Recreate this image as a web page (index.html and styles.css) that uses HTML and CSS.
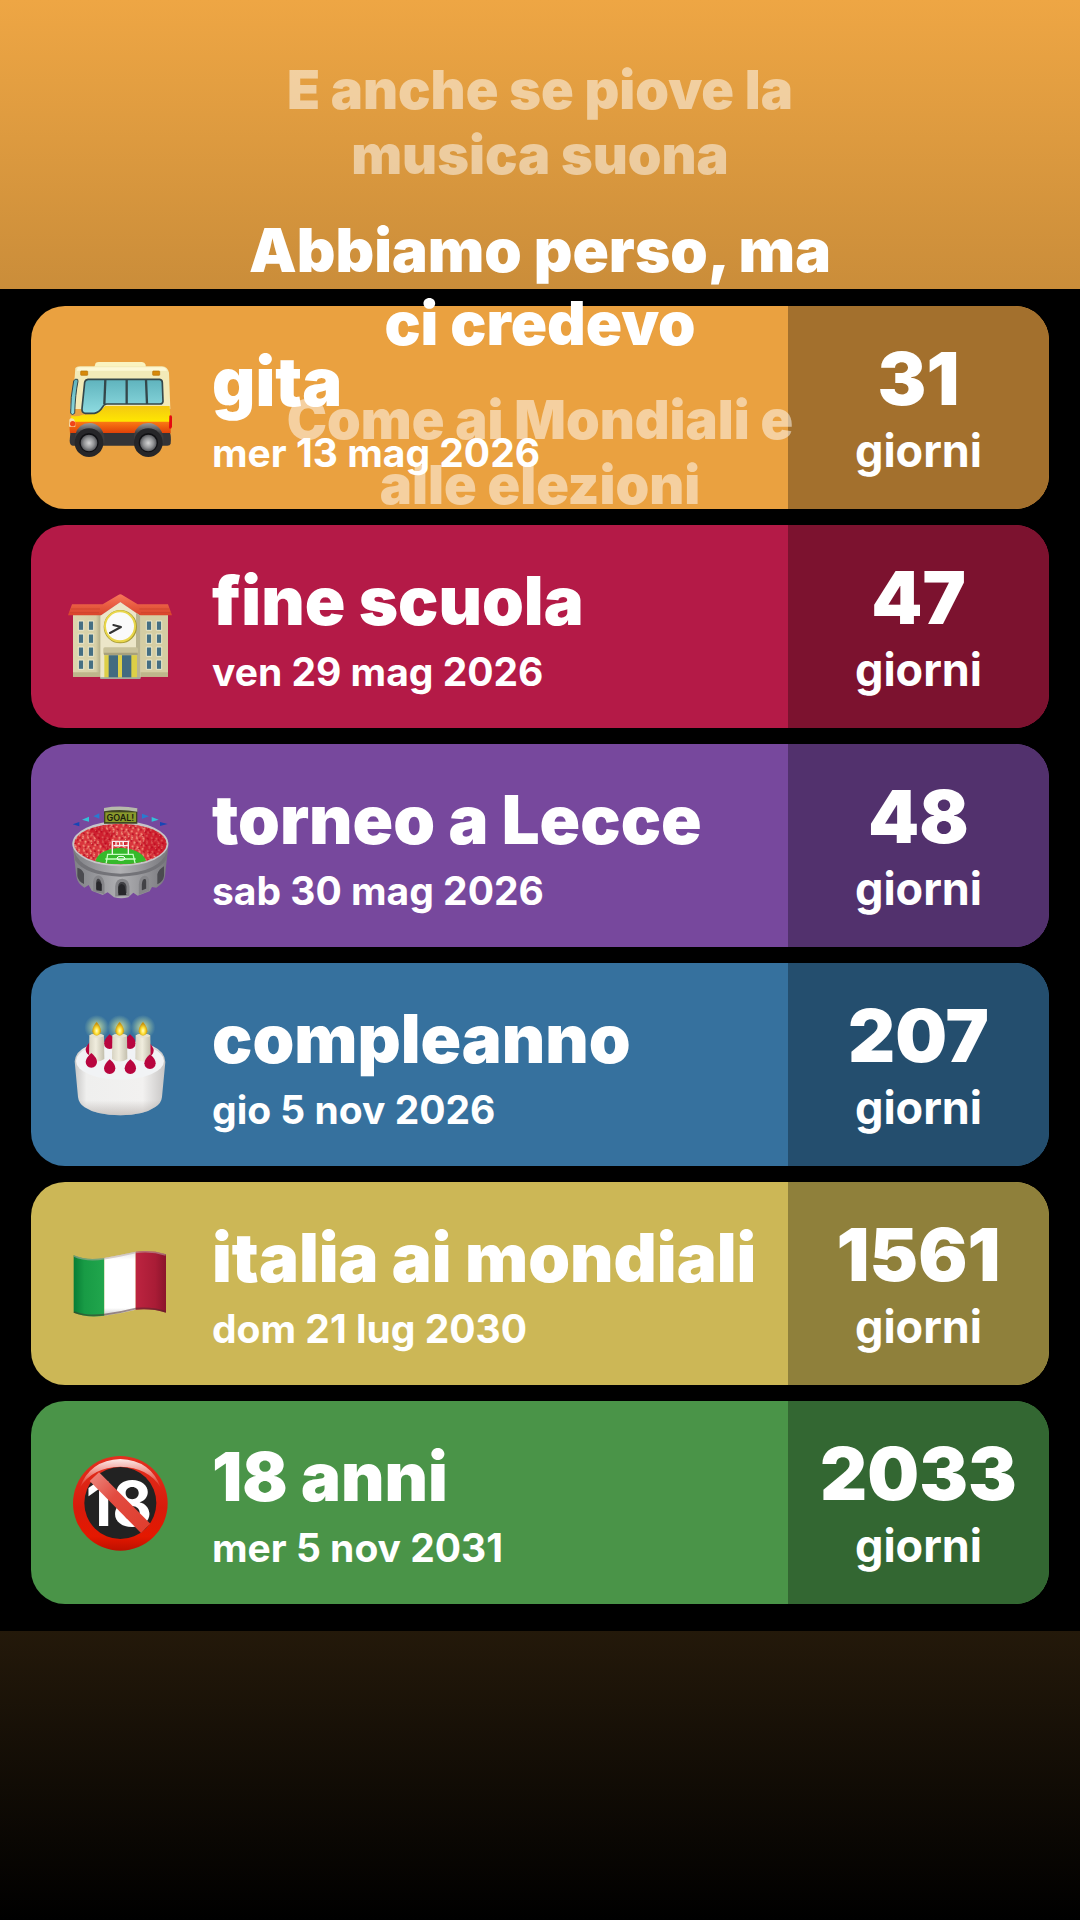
FILE: index.html
```html
<!DOCTYPE html>
<html lang="it">
<head>
<meta charset="utf-8">
<meta name="viewport" content="width=device-width, initial-scale=1">
<title>Conto alla rovescia</title>
<link rel="stylesheet" href="styles.css">
</head>
<body>
<main class="story">
  <ul class="countdowns">
    <li class="card card-orange">
      <svg class="icon" viewBox="0 7 420 390" aria-hidden="true">
        <defs>
          <linearGradient id="glass" x1="0" y1="0" x2="0" y2="1"><stop offset="0" stop-color="#5fb3bd"/><stop offset="1" stop-color="#8edbe0"/></linearGradient>
          <linearGradient id="yellow" x1="0" y1="0" x2="0" y2="1"><stop offset="0" stop-color="#f3c911"/><stop offset="1" stop-color="#ffe800"/></linearGradient>
          <linearGradient id="red" x1="0" y1="0" x2="0" y2="1"><stop offset="0" stop-color="#fb7a13"/><stop offset="1" stop-color="#df3f08"/></linearGradient>
          <linearGradient id="arch" x1="0" y1="0" x2="0" y2="1"><stop offset="0" stop-color="#9a9a9a"/><stop offset=".5" stop-color="#3c3c3e"/></linearGradient>
          <radialGradient id="hub"><stop offset="0" stop-color="#d4d4d4"/><stop offset=".6" stop-color="#939496"/><stop offset="1" stop-color="#55565a"/></radialGradient>
        </defs>
        <path d="M132 82L137 67Q140 64 147 64H276Q284 65 287 72V84Z" fill="#faf3c0"/>
        <path d="M76 82Q80 77 90 77H336Q353 78 357 96L361 205H60L74 110Z" fill="#f2eab8"/>
        <path d="M84 80H340Q349 82 351 90H80Z" fill="#fdf8d6"/>
        <path d="M64 225Q80 230 98 222Q145 225 165 196H359L362 245H60Z" fill="url(#yellow)"/>
        <path d="M57 243H362V278H60Z" fill="url(#red)"/>
        <path d="M83 116Q74 113 71 121Q61 170 62 218Q67 225 74 218Q76 160 84 122Z" fill="url(#glass)" stroke="#33464a" stroke-width="3"/>
        <path d="M114 116H329Q337 117 337 126L339 182Q338 190 330 190H170Q161 191 158 199Q147 216 133 218H106Q95 217 96 204L104 125Q106 117 114 116Z" fill="url(#glass)" stroke="#34474a" stroke-width="5"/>
        <path d="M166 118L163 190M230 117V190M288 117L291 190" stroke="#34474a" stroke-width="7"/>
        <rect x="92" y="91" width="21" height="13" rx="2" fill="#d78909" stroke="#b66f05" stroke-width="2"/>
        <rect x="308" y="91" width="21" height="13" rx="2" fill="#d78909" stroke="#b66f05" stroke-width="2"/>
        <path d="M58 237Q62 229 72 236L76 246V258H57Z" fill="#f4dfad"/>
        <circle cx="68" cy="249" r="8" fill="#f24418"/>
        <path d="M358 225Q366 221 366 230V258Q364 267 357 263Z" fill="#e50910"/>
        <path d="M61 277H360Q364 285 362 309Q360 315 352 315H68Q59 313 59 300Z" fill="#343437"/>
        <path d="M76 282Q84 248 119 247Q154 249 163 287V308H76ZM252 282Q260 248 295 247Q330 249 340 287V308H252Z" fill="url(#arch)"/>
        <circle cx="117" cy="306" r="43" fill="#262629"/><circle cx="117" cy="306" r="29" fill="#101013"/><circle cx="117" cy="307" r="25" fill="url(#hub)"/>
        <circle cx="295" cy="306" r="43" fill="#262629"/><circle cx="295" cy="306" r="29" fill="#101013"/><circle cx="295" cy="307" r="25" fill="url(#hub)"/>
      </svg>
      <div class="info"><h2 class="title">gita</h2><p class="date">mer 13 mag 2026</p></div>
      <div class="count"><span class="number">31</span><span class="unit">giorni</span></div>
    </li>
    <li class="card card-red">
      <svg class="icon" viewBox="0 -25 420 390" aria-hidden="true">
        <defs>
          <linearGradient id="roof" x1="0" y1="0" x2="0" y2="1"><stop offset="0" stop-color="#f8775a"/><stop offset="1" stop-color="#da452b"/></linearGradient>
          <linearGradient id="wall" x1="0" y1="0" x2="1" y2="0"><stop offset="0" stop-color="#ddd6ad"/><stop offset=".8" stop-color="#d6cfa7"/><stop offset="1" stop-color="#aaa580"/></linearGradient>
          <g id="panes" fill="#456f83" stroke="#eee9cb" stroke-width="3"><path d="M0 0H16V28H0ZM30 0H46V28H30ZM0 39H16V67H0ZM30 39H46V67H30ZM0 78H16V106H0ZM30 78H46V106H30ZM0 117H16V145H0ZM30 117H46V145H30Z"/></g>
        </defs>
        <path d="M69 134H155V319H69Z" fill="url(#wall)"/>
        <path d="M268 134H354V319H268Z" fill="#d5cda3"/>
        <path d="M69 306H155V319H69ZM268 306H354V319H268Z" fill="#beb68b"/>
        <path d="M66 102H158L205 74Q211 69 217 74L263 102H354L366 135H268L211 95L153 135H54Z" fill="url(#roof)"/>
        <path d="M63 116H150M268 116H359M58 127H147M273 127H363" stroke="#c9412b" stroke-width="3" opacity=".65"/>
        <path d="M151 136L211 95L271 136V324H151Z" fill="#ece6c8"/>
        <path d="M258 127L271 136V324H258Z" fill="#b9b390"/>
        <use href="#panes" x="85" y="152"/><use href="#panes" x="289" y="152"/>
        <circle cx="211" cy="169" r="45" fill="#fafafa" stroke="#a79b35" stroke-width="10"/>
        <circle cx="210" cy="168" r="45" fill="#fafafa" stroke="#ead74a" stroke-width="6"/>
        <path d="M180 188L213 170L190 164" fill="none" stroke="#333" stroke-width="6" stroke-linecap="round" stroke-linejoin="round"/>
        <path d="M163 252H261V323H163Z" fill="#ddcf47"/>
        <path d="M176 254H204V323H176ZM216 254H244V323H216Z" fill="#426b80"/>
        <path d="M160 235Q160 231 166 231H258Q264 231 264 237V250Q263 255 258 255H165Q160 254 160 249Z" fill="#c8c19a"/>
        <path d="M162 247H263V254H162Z" fill="#a7a17d"/>
        <path d="M151 321H271V326H151Z" fill="#a3aa9c"/>
      </svg>
      <div class="info"><h2 class="title">fine scuola</h2><p class="date">ven 29 mag 2026</p></div>
      <div class="count"><span class="number">47</span><span class="unit">giorni</span></div>
    </li>
    <li class="card card-purple">
      <svg class="icon" viewBox="0 -28 420 390" aria-hidden="true">
        <defs>
          <linearGradient id="stone" x1="0" y1="0" x2="1" y2="0"><stop offset="0" stop-color="#7e7f84"/><stop offset=".5" stop-color="#b0b0b3"/><stop offset="1" stop-color="#77777c"/></linearGradient>
          <pattern id="crowd" width="47" height="41" patternUnits="userSpaceOnUse" patternTransform="rotate(17)"><rect width="47" height="41" fill="#d9353c"/><path d="M2 5l5 3M17 2l4 5M33 6l5-2M8 18l3 5M26 15l6 2M41 20l2 5M3 33l6 2M19 29l5-3M34 34l5 3M15 12l3-2" stroke="#f59b82" stroke-width="5"/><path d="M10 8l3 3M27 5l-3 4M43 11l-4 3M20 20l-4 3M35 26l-4 2M12 31l3 4M27 37l4-2M44 34l-3-3" stroke="#b70a22" stroke-width="5"/><path d="M6 14l2 2M23 10l2 2M38 17l2 1M14 26l2 1M30 22l2 2M5 39l2-1M24 33l2 1M42 29l2-2" stroke="#e9d3b0" stroke-width="3"/></pattern>
          <clipPath id="bowl"><ellipse cx="211" cy="161" rx="139" ry="61"/></clipPath>
        </defs>
        <path d="M67 155L79 258Q82 280 103 292L116 284L125 301L158 314L173 306L192 321Q215 327 235 321L250 307L263 316L299 303L306 290L319 292Q342 279 345 258L356 155Z" fill="url(#stone)"/>
        <path d="M72 183Q96 247 211 250Q328 247 352 183L350 206Q320 255 211 259Q103 255 75 209Z" fill="#737378"/>
        <ellipse cx="211" cy="160" rx="144" ry="68" fill="#c5c5c8"/>
        <ellipse cx="211" cy="161" rx="139" ry="61" fill="url(#crowd)"/>
        <g clip-path="url(#bowl)">
          <path d="M130 90L190 130L170 181L118 122ZM290 100L360 130V220L280 180Z" fill="#bd001b" opacity=".4"/>
          <path d="M135 222Q137 177 211 172Q287 178 290 222Z" fill="#35b92b"/>
          <path d="M168 222L173 192H249L256 222M166 206H257" fill="none" stroke="#c5ffc0" stroke-width="4"/>
          <ellipse cx="213" cy="204" rx="12" ry="6" fill="none" stroke="#fff" stroke-width="3"/>
        </g>
        <path d="M187 191V153H235V191M191 166H234M198 153V169M209 153V169M220 153V169" fill="none" stroke="#f8eef0" stroke-width="4"/>
        <path d="M162 55Q211 46 262 56V100H162Z" fill="#414521"/>
        <path d="M162 53Q211 44 262 54V64Q211 54 162 63Z" fill="#b6b9aa"/>
        <rect x="166" y="66" width="92" height="29" fill="#8a9a2c"/>
        <text class="goal" x="211" y="91" text-anchor="middle">GOAL!</text>
        <path d="M68 102L88 95V108ZM353 101L330 95V107Z" fill="#1746b5"/>
        <path d="M96 88L117 79V94ZM326 88L305 80V94Z" fill="#34c0d8"/>
        <path d="M130 78L148 69V85ZM297 78L276 70V85Z" fill="#287bd0"/>
        <g fill="#424246" stroke="#858589" stroke-width="9"><path d="M200 314V288Q202 270 217 270Q232 271 234 289V312ZM134 299V274Q136 260 146 260Q157 263 159 282V306ZM271 307V282Q273 262 284 261Q294 262 293 277V298Z"/></g>
        <path d="M82 232Q96 235 102 250V281Q84 272 82 257ZM342 228Q326 237 322 252V282Q340 273 342 257Z" fill="#4b4b50"/>
        <path d="M205 315V290Q212 275 224 286L229 314ZM139 300V278Q146 266 155 282V302Z" fill="#27272b"/>
      </svg>
      <div class="info"><h2 class="title">torneo a Lecce</h2><p class="date">sab 30 mag 2026</p></div>
      <div class="count"><span class="number">48</span><span class="unit">giorni</span></div>
    </li>
    <li class="card card-blue">
      <svg class="icon" viewBox="0 -1 420 390" aria-hidden="true">
        <defs>
          <linearGradient id="cake" x1="0" y1="0" x2="1" y2="0"><stop offset="0" stop-color="#c8c7c6"/><stop offset=".13" stop-color="#efefee"/><stop offset=".75" stop-color="#f2f1f0"/><stop offset="1" stop-color="#c7c5c4"/></linearGradient>
          <linearGradient id="base" x1="0" y1="0" x2="0" y2="1"><stop offset=".8" stop-color="#998f8a" stop-opacity="0"/><stop offset="1" stop-color="#998f8a" stop-opacity=".45"/></linearGradient>
          <linearGradient id="wax" x1="0" y1="0" x2="1" y2="0"><stop offset="0" stop-color="#d7d3c2"/><stop offset=".45" stop-color="#f0edde"/><stop offset="1" stop-color="#c3bfad"/></linearGradient>
          <radialGradient id="glow"><stop offset="0" stop-color="#ffff9d" stop-opacity=".8"/><stop offset="1" stop-color="#d1f4aa" stop-opacity="0"/></radialGradient>
          <radialGradient id="flame" cx=".5" cy=".65"><stop offset="0" stop-color="#fffccb"/><stop offset=".45" stop-color="#ffe33b"/><stop offset="1" stop-color="#c8910c"/></radialGradient>
          <path id="berry" d="M0-22Q17-8 17 5Q16 21 0 22Q-16 21-17 5Q-16-8 0-22Z" fill="#b8053f"/>
          <g id="candle"><circle cx="0" cy="-20" r="37" fill="url(#glow)"/><path d="M-22 4Q0-6 22 4L23 75Q0 90-23 75Z" fill="url(#wax)"/><ellipse cx="0" cy="5" rx="21" ry="6" fill="#e5e1d0"/><path d="M0-37Q14-19 13-8Q10 5 0 5Q-10 5-13-8Q-13-22 0-37Z" fill="url(#flame)"/></g>
        </defs>
        <path d="M74 183Q79 123 211 121Q343 123 346 185L336 290Q334 309 316 320Q280 345 211 345Q140 345 104 321Q86 309 84 290Z" fill="url(#cake)"/>
        <path d="M74 183Q79 123 211 121Q343 123 346 185L336 290Q334 309 316 320Q280 345 211 345Q140 345 104 321Q86 309 84 290Z" fill="url(#base)"/>
        <ellipse cx="210" cy="182" rx="132" ry="56" fill="#f1f3f5"/>
        <use href="#berry" x="179" y="124"/><use href="#berry" x="240" y="124"/><use href="#berry" x="124" y="143"/><use href="#berry" x="294" y="146"/>
        <use href="#candle" x="140" y="101"/><use href="#candle" x="209" y="101"/><use href="#candle" x="279" y="101"/>
        <use href="#berry" x="124" y="180"/><use href="#berry" x="179" y="199"/><use href="#berry" x="241" y="199"/><use href="#berry" x="300" y="184"/>
      </svg>
      <div class="info"><h2 class="title">compleanno</h2><p class="date">gio 5 nov 2026</p></div>
      <div class="count"><span class="number">207</span><span class="unit">giorni</span></div>
    </li>
    <li class="card card-yellow">
      <svg class="icon" viewBox="0 -4 420 390" aria-hidden="true">
        <defs>
          <linearGradient id="green" x1="0" y1="0" x2="1" y2="0"><stop offset="0" stop-color="#087d35"/><stop offset=".35" stop-color="#189b45"/><stop offset="1" stop-color="#21a64d"/></linearGradient>
          <linearGradient id="white" x1="0" y1="0" x2="0" y2="1"><stop offset="0" stop-color="#e3e3e3"/><stop offset=".12" stop-color="#fff"/><stop offset=".88" stop-color="#fff"/><stop offset="1" stop-color="#c9c9c9"/></linearGradient>
          <linearGradient id="crimson" x1="0" y1="0" x2="1" y2="0"><stop offset="0" stop-color="#bd2440"/><stop offset=".65" stop-color="#a91c36"/><stop offset="1" stop-color="#8b142b"/></linearGradient>
        </defs>
        <path d="M71 105Q110 122 163 113V286Q109 293 71 277Z" fill="url(#green)"/>
        <path d="M163 113Q206 105 257 94V268Q209 281 163 286Z" fill="url(#white)"/>
        <path d="M257 94Q305 88 348 102V277Q306 263 257 268Z" fill="url(#crimson)"/>
        <path d="M72 107Q110 124 163 115Q211 107 257 96Q305 90 347 104" fill="none" stroke="#b9a9a4" stroke-width="5" opacity=".55"/>
        <path d="M72 275Q109 290 163 283Q211 277 257 265Q305 261 347 274" fill="none" stroke="#4b2929" stroke-width="5" opacity=".5"/>
      </svg>
      <div class="info"><h2 class="title">italia ai mondiali</h2><p class="date">dom 21 lug 2030</p></div>
      <div class="count"><span class="number">1561</span><span class="unit">giorni</span></div>
    </li>
    <li class="card card-green">
      <svg class="icon" viewBox="0 -7 420 390" aria-hidden="true">
        <defs>
          <linearGradient id="ring" x1="0" y1="0" x2="0" y2="1"><stop offset="0" stop-color="#e2301f"/><stop offset=".55" stop-color="#d91b0b"/><stop offset=".85" stop-color="#e41800"/><stop offset="1" stop-color="#bd1000"/></linearGradient>
          <linearGradient id="shine" x1="0" y1="0" x2="0" y2="1"><stop offset="0" stop-color="#fff" stop-opacity=".9"/><stop offset="1" stop-color="#fff" stop-opacity="0"/></linearGradient>
          <linearGradient id="slash" x1="0" y1="0" x2="1" y2="1"><stop offset="0" stop-color="#ed8b82"/><stop offset=".4" stop-color="#e24b40"/><stop offset="1" stop-color="#df3c2c"/></linearGradient>
        </defs>
        <circle cx="211" cy="189" r="142" fill="url(#ring)"/>
        <path d="M89 143Q120 59 211 56Q302 59 333 143Q295 80 211 79Q127 80 89 143Z" fill="url(#shine)"/>
        <circle cx="211" cy="188" r="108" fill="#222"/>
        <text class="eighteen" x="207" y="256" text-anchor="middle">18</text>
        <path d="M119 122L147 96L301 250L273 278Z" fill="url(#slash)"/>
      </svg>
      <div class="info"><h2 class="title">18 anni</h2><p class="date">mer 5 nov 2031</p></div>
      <div class="count"><span class="number">2033</span><span class="unit">giorni</span></div>
    </li>
  </ul>
  <div class="lyrics">
    <p class="line">E anche se piove la musica suona</p>
    <p class="line line-current">Abbiamo perso, ma ci credevo</p>
    <p class="line">Come ai Mondiali e alle elezioni</p>
  </div>
</main>
</body>
</html>
```
FILE: styles.css
```css
* {
  box-sizing: border-box;
  margin: 0;
  padding: 0;
}

body {
  background: #000;
  color: #fff;
  font-family: Inter, "Liberation Sans", sans-serif;
}

.story {
  position: relative;
  min-height: 100vh;
  padding-top: 289px;
  background: linear-gradient(#eea644, #000);
}

.countdowns {
  display: flex;
  flex-direction: column;
  gap: 16px;
  padding: 17px 31px 27px;
  background: #000;
  list-style: none;
}

.card {
  display: grid;
  grid-template-columns: 140px 1fr 261px;
  column-gap: 20px;
  align-items: center;
  min-height: 203px;
  padding-left: 19px;
  border-radius: 34px;
  overflow: hidden;
}

.card-orange { background: #eaa140; --shade: #a3702d; }
.card-red { background: #b41a47; --shade: #7c122f; }
.card-purple { background: #77489d; --shade: #52316d; }
.card-blue { background: #36719e; --shade: #244e6e; }
.card-yellow { background: #ccb756; --shade: #8f803b; }
.card-green { background: #4a9448; --shade: #336732; }

.icon {
  display: block;
  width: 140px;
  height: 130px;
}

.goal {
  font-size: 27px;
  font-weight: 600;
  fill: #1d210f;
}

.eighteen {
  font-size: 184px;
  font-weight: 700;
  fill: #fff;
}

.info {
  display: flex;
  flex-direction: column;
  gap: 8px;
  padding: 2px 0 0 2px;
  white-space: nowrap;
}

.title {
  font-size: 67px;
  font-weight: 900;
  line-height: 80px;
}

.date {
  font-size: 39px;
  font-weight: 700;
  line-height: 46px;
}

.count {
  display: flex;
  flex-direction: column;
  align-items: center;
  justify-content: center;
  align-self: stretch;
  gap: 6px;
  background: var(--shade);
}

.number {
  font-size: 73px;
  font-weight: 900;
  line-height: 80px;
}

.unit {
  font-size: 45px;
  font-weight: 700;
  line-height: 52px;
}

.lyrics {
  position: absolute;
  top: 57px;
  left: 0;
  right: 0;
  display: flex;
  flex-direction: column;
  align-items: center;
  gap: 27px;
  text-align: center;
}

.line {
  max-width: 610px;
  color: rgba(255, 255, 255, 0.5);
  font-size: 54px;
  font-weight: 900;
  line-height: 65px;
}

.line-current {
  color: #fff;
  font-size: 60px;
  line-height: 73px;
}
```
